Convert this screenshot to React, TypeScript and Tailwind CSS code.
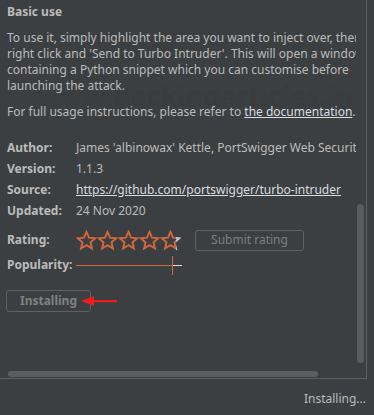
import React from "react";

const Star = ({ id, partial }: { id: string; partial?: boolean }) => (
  <svg width="21" height="21" viewBox="0 0 24 24" className="shrink-0">
    {partial && (
      <defs>
        <linearGradient id={id} x1="0" x2="1" y1="0" y2="0">
          <stop offset="0.82" stopColor="#d2683c" />
          <stop offset="0.82" stopColor="#c8c8c8" />
        </linearGradient>
      </defs>
    )}
    <path
      d="M12 2.2l2.9 6.6 7.1.6-5.4 4.7 1.6 7-6.2-3.7-6.2 3.7 1.6-7L2 9.4l7.1-.6z"
      fill="none"
      stroke={partial ? `url(#${id})` : "#d2683c"}
      strokeWidth="2.2"
      strokeLinejoin="miter"
    />
  </svg>
);

export default function App() {
  const font = { fontFamily: '"Noto Sans", "Open Sans", sans-serif' };
  return (
    <div
      className="w-[374px] h-[415px] bg-[#3c3f41] text-[#bbbbbb] relative overflow-hidden text-[12px]"
      style={font}
    >
      <div className="w-[367px] h-[379px] border-r border-b border-[#5d5f61] relative overflow-hidden">
        <div className="absolute left-[37px] top-[76px] text-[27px] font-bold text-[#3a3c3e] whitespace-nowrap pointer-events-none">
          www.hackingarticles.in
        </div>
        <div className="relative w-[356px] overflow-hidden pl-[7px] pt-[2px]">
          <div className="font-bold leading-[20px]">Basic use</div>
          <div className="mt-[8px] leading-[16px] whitespace-nowrap">
            <div>To use it, simply highlight the area you want to inject over, then</div>
            <div>right click and 'Send to Turbo Intruder'. This will open a window</div>
            <div>containing a Python snippet which you can customise before</div>
            <div>launching the attack.</div>
          </div>
          <div className="mt-[10px] leading-[16px] whitespace-nowrap">
            For full usage instructions, please refer to{" "}
            <span className="underline text-[#d6dde3]">the documentation</span>.
          </div>
          <div className="mt-[20px] grid grid-cols-[69px_1fr] gap-y-[5px] leading-[16px] whitespace-nowrap">
            <div className="font-bold">Author:</div>
            <div>James 'albinowax' Kettle, PortSwigger Web Security</div>
            <div className="font-bold">Version:</div>
            <div>1.1.3</div>
            <div className="font-bold">Source:</div>
            <div className="underline text-[#d6dde3]">https://github.com/portswigger/turbo-intruder</div>
            <div className="font-bold">Updated:</div>
            <div>24 Nov 2020</div>
          </div>
          <div className="mt-[10px] flex items-center h-[22px]">
            <div className="w-[69px] font-bold">Rating:</div>
            <div className="flex items-center">
              <Star id="s1" />
              <Star id="s2" />
              <Star id="s3" />
              <Star id="s4" />
              <Star id="s5" partial />
            </div>
            <div className="ml-[14px] w-[109px] h-[21px] border border-[#5e6062] rounded-[3px] flex items-center justify-center text-[#7c7e80]">
              Submit rating
            </div>
          </div>
          <div className="mt-[4px] flex items-center h-[20px]">
            <div className="w-[69px] font-bold">Popularity:</div>
            <div className="relative w-[106px] h-[20px]">
              <div className="absolute left-0 top-[10px] w-[96px] h-[1px] bg-[#d2683c]" />
              <div className="absolute left-[96px] top-[10px] w-[10px] h-[1px] bg-[#dddddd]" />
              <div className="absolute left-[96px] top-[1px] w-[1px] h-[19px] bg-[#d2683c]" />
            </div>
          </div>
          <div className="mt-[15px] flex items-center">
            <div className="w-[85px] h-[22px] -ml-[1px] border border-[#5e6062] rounded-[3px] flex items-center justify-center font-bold text-[#7f8183]">
              Installing
            </div>
            <svg width="36" height="12" viewBox="0 0 36 12" className="-ml-[10px]">
              <path d="M0 6 L13 1 L13 11 Z" fill="#ee1c1c" />
              <rect x="12" y="5" width="24" height="2.2" fill="#ee1c1c" />
            </svg>
          </div>
        </div>
        <div className="absolute left-[357px] top-[204px] w-[7px] h-[159px] rounded-full bg-[#595c5e]" />
        <div className="absolute left-[8px] top-[371px] w-[310px] h-[6px] rounded-full bg-[#5a5e60]" />
      </div>
      <div className="absolute right-[8px] top-[390px] leading-[18px]">Installing...</div>
    </div>
  );
}
